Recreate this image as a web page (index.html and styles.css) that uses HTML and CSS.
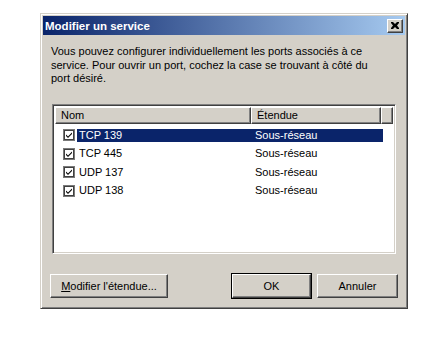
FILE: index.html
```html
<!DOCTYPE html>
<html lang="fr">
<head>
<meta charset="utf-8">
<link rel="stylesheet" href="styles.css">
</head>
<body>
<div class="dialog">
  <div class="titlebar">
    <span class="title">Modifier un service</span>
    <span class="close"><svg width="8" height="7" viewBox="0 0 8 7"><path d="M0 0h2l2 2 2-2h2v1l-2 2.5 2 2.5v1h-2l-2-2-2 2h-2v-1l2-2.5-2-2.5z" fill="#000"/></svg></span>
  </div>
  <div class="body">
    <p class="desc">Vous pouvez configurer individuellement les ports associés à ce service. Pour ouvrir un port, cochez la case se trouvant à côté du port désiré.</p>
    <div class="list">
      <div class="header">
        <div class="hcell c1">Nom</div>
        <div class="hcell c2">Étendue</div>
        <div class="hcell c3"></div>
      </div>
      <div class="row first">
        <span class="chk"><svg width="12" height="12" viewBox="0 0 12 12"><rect x="0.5" y="0.5" width="11" height="11" fill="#fff" stroke="#7a7a7a"/><rect x="1.5" y="1.5" width="9" height="9" fill="none" stroke="#404040"/><path d="M3 5.5l2 2 4-4v1.6l-4 4-2-2z" fill="#000"/></svg></span>
        <span class="name sel">TCP 139</span>
        <span class="scope sel">Sous-réseau</span>
      </div>
      <div class="row">
        <span class="chk"><svg width="12" height="12" viewBox="0 0 12 12"><rect x="0.5" y="0.5" width="11" height="11" fill="#fff" stroke="#7a7a7a"/><rect x="1.5" y="1.5" width="9" height="9" fill="none" stroke="#404040"/><path d="M3 5.5l2 2 4-4v1.6l-4 4-2-2z" fill="#000"/></svg></span>
        <span class="name">TCP 445</span>
        <span class="scope">Sous-réseau</span>
      </div>
      <div class="row">
        <span class="chk"><svg width="12" height="12" viewBox="0 0 12 12"><rect x="0.5" y="0.5" width="11" height="11" fill="#fff" stroke="#7a7a7a"/><rect x="1.5" y="1.5" width="9" height="9" fill="none" stroke="#404040"/><path d="M3 5.5l2 2 4-4v1.6l-4 4-2-2z" fill="#000"/></svg></span>
        <span class="name">UDP 137</span>
        <span class="scope">Sous-réseau</span>
      </div>
      <div class="row">
        <span class="chk"><svg width="12" height="12" viewBox="0 0 12 12"><rect x="0.5" y="0.5" width="11" height="11" fill="#fff" stroke="#7a7a7a"/><rect x="1.5" y="1.5" width="9" height="9" fill="none" stroke="#404040"/><path d="M3 5.5l2 2 4-4v1.6l-4 4-2-2z" fill="#000"/></svg></span>
        <span class="name">UDP 138</span>
        <span class="scope">Sous-réseau</span>
      </div>
    </div>
    <div class="buttons">
      <button class="btn wide"><u>M</u>odifier l'étendue...</button>
      <span class="spacer"></span>
      <button class="btn ok">OK</button>
      <button class="btn">Annuler</button>
    </div>
  </div>
</div>
</body>
</html>
```
FILE: styles.css
```css
html, body {
  margin: 0;
  padding: 0;
  background: #fff;
}
body {
  font-family: "Liberation Sans", Arial, sans-serif;
  font-size: 11px;
  color: #000;
}
.dialog {
  margin: 13px 0 0 40px;
  width: 368px;
  height: 296px;
  box-sizing: border-box;
  background: #d4d0c8;
  border: 1px solid;
  border-color: #d4d0c8 #404040 #404040 #d4d0c8;
  box-shadow: inset 1px 1px 0 #fff, inset -1px -1px 0 #808080;
  padding: 2px;
  display: flex;
  flex-direction: column;
}
.titlebar {
  height: 19px;
  background: linear-gradient(to right, #0a246a, #a6caf0);
  display: flex;
  align-items: center;
  justify-content: space-between;
  padding: 0 2px 0 2px;
}
.title {
  color: #fff;
  font-weight: bold;
  font-size: 11.5px;
}
.close {
  width: 16px;
  height: 14px;
  box-sizing: border-box;
  background: #d4d0c8;
  border: 1px solid;
  border-color: #fff #404040 #404040 #fff;
  box-shadow: inset -1px -1px 0 #808080;
  display: flex;
  align-items: center;
  justify-content: center;
}
.close svg { display: block; }
.body {
  flex: 1;
  padding: 0 7px 0 7px;
  display: flex;
  flex-direction: column;
}
.desc {
  margin: 10px 0 0 1px;
  width: 330px;
  line-height: 13.5px;
  height: 41px;
}
.list {
  margin: 18px 2px 0 2px;
  height: 150px;
  box-sizing: border-box;
  background: #fff;
  border: 1px solid;
  border-color: #808080 #fff #fff #808080;
  box-shadow: inset 1px 1px 0 #404040, inset -1px -1px 0 #d4d0c8;
  padding: 2px;
}
.header {
  display: flex;
  height: 17px;
}
.hcell {
  box-sizing: border-box;
  background: #d4d0c8;
  border: 1px solid;
  border-color: #fff #404040 #404040 #fff;
  box-shadow: inset -1px -1px 0 #808080;
  padding: 1px 0 0 5px;
  line-height: 13px;
}
.c1 { width: 196px; }
.c2 { width: 130px; }
.c3 { flex: 1; }
.row {
  display: flex;
  align-items: center;
  height: 18.5px;
}
.row.first { margin-top: 2px; }
.chk {
  width: 12px;
  height: 12px;
  margin-left: 8px;
  margin-right: 2px;
}
.chk svg { display: block; }
.name {
  width: 173px;
  padding-left: 2px;
  line-height: 13px;
}
.scope {
  width: 128px;
  padding-left: 3px;
  line-height: 13px;
}
.sel {
  background: #0a246a;
  color: #fff;
}
.buttons {
  margin-top: 20px;
  display: flex;
  gap: 6px;
}
.spacer { flex: 1; }
.btn {
  height: 24px;
  width: 81px;
  font-family: inherit;
  font-size: 11px;
  color: #000;
  background: #d4d0c8;
  border: 1px solid;
  border-color: #fff #404040 #404040 #fff;
  box-shadow: inset -1px -1px 0 #808080, inset 1px 1px 0 #d4d0c8;
  padding: 0;
}
.btn.wide { width: 118px; }
.btn.ok {
  width: 79px;
  outline: 1px solid #000;
  outline-offset: 0;
}
.btn u { text-decoration: underline; }
```
